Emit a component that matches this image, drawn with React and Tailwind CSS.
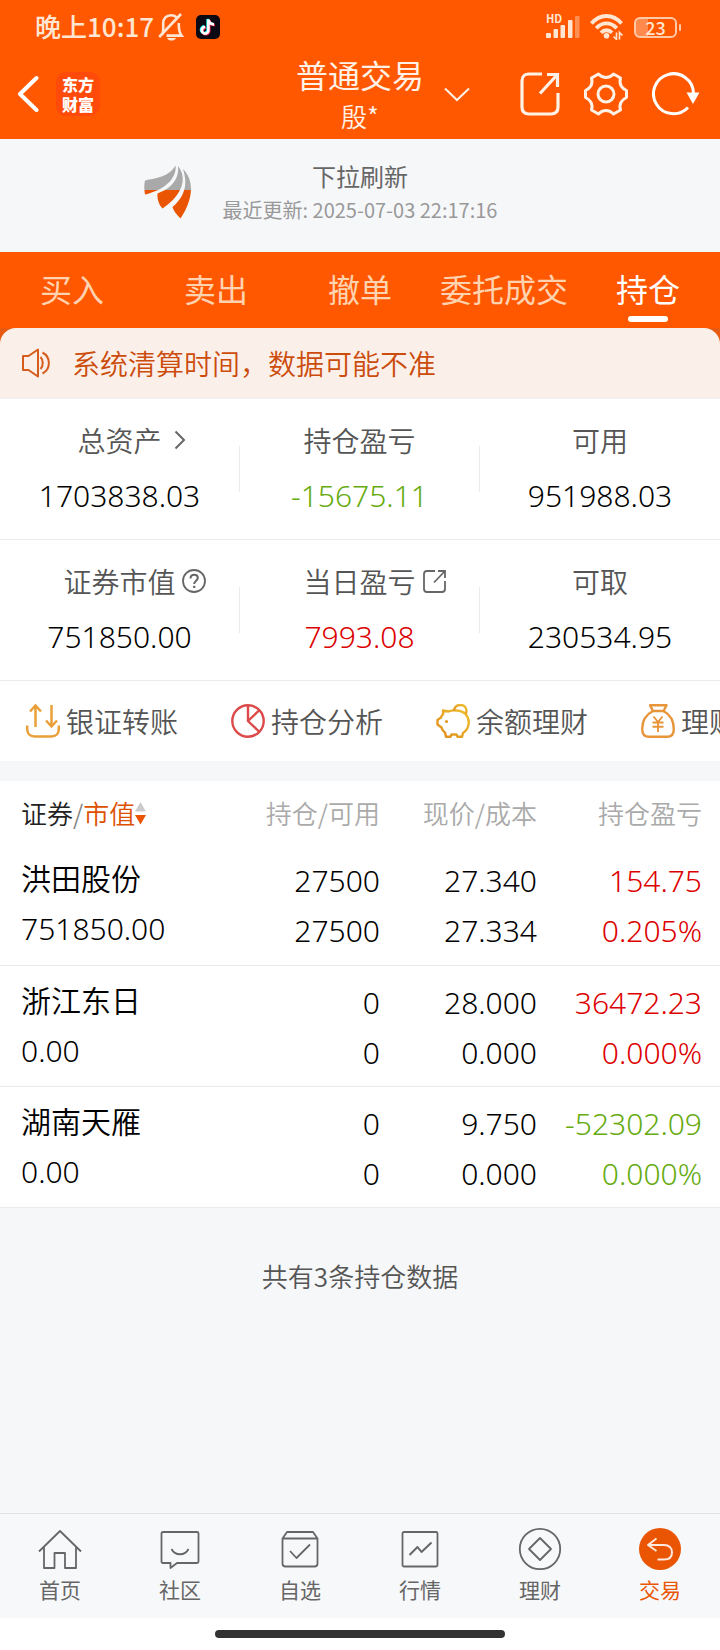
import { useState } from 'react'

const TABS = ['买入', '卖出', '撤单', '委托成交', '持仓']

const STATS = [
  [
    { label: '总资产', value: '1703838.03', color: 'text-black', icon: 'chevron' },
    { label: '持仓盈亏', value: '-15675.11', color: 'text-[#66ab10]' },
    { label: '可用', value: '951988.03', color: 'text-black' },
  ],
  [
    { label: '证券市值', value: '751850.00', color: 'text-black', icon: 'help' },
    { label: '当日盈亏', value: '7993.08', color: 'text-[#dc0000]', icon: 'open' },
    { label: '可取', value: '230534.95', color: 'text-black' },
  ],
]

const HOLDINGS = [
  {
    name: '洪田股份',
    marketValue: '751850.00',
    held: '27500',
    available: '27500',
    price: '27.340',
    cost: '27.334',
    profit: '154.75',
    rate: '0.205%',
    color: 'text-[#dc0000]',
  },
  {
    name: '浙江东日',
    marketValue: '0.00',
    held: '0',
    available: '0',
    price: '28.000',
    cost: '0.000',
    profit: '36472.23',
    rate: '0.000%',
    color: 'text-[#dc0000]',
  },
  {
    name: '湖南天雁',
    marketValue: '0.00',
    held: '0',
    available: '0',
    price: '9.750',
    cost: '0.000',
    profit: '-52302.09',
    rate: '0.000%',
    color: 'text-[#66ab10]',
  },
]

/* ---------- status bar icons ---------- */

function BellOffIcon() {
  return (
    <svg className="w-[26px] h-[28px]" viewBox="0 0 26 28" fill="none" stroke="#ffe6d3" strokeWidth="2.6">
      <path d="M4 21.5 C5.8 19 5.2 15 5.2 10.5 C5.2 5.5 8.5 2.2 13 2.2 C15.5 2.2 17.6 3.2 19 5" />
      <path d="M20.8 10 C20.8 15 20.5 18.5 23.5 22.6 H8.5" />
      <path d="M23 1 L1.2 24" />
      <path d="M9 25 H18 C17 27 15.5 27.6 13.5 27.6 C11.5 27.6 10 27 9 25 Z" fill="#ffe6d3" stroke="none" />
    </svg>
  )
}

function TiktokIcon() {
  const note = 'M12.4 4.5 V15.3 A3.3 3.3 0 1 1 9.1 12 M12.4 4.5 C12.8 7.5 14.8 9.3 18 9.4'
  return (
    <svg className="w-6 h-6" viewBox="0 0 24 24" fill="none">
      <rect width="24" height="24" rx="5" fill="#0b0a14" />
      <g strokeWidth="2.6">
        <path d={note} stroke="#25f4ee" transform="translate(-0.8 -0.6)" />
        <path d={note} stroke="#fe2c55" transform="translate(0.8 0.7)" />
        <path d={note} stroke="#ffffff" />
      </g>
    </svg>
  )
}

function SignalIcon() {
  return (
    <svg className="w-[34px] h-[22px]" viewBox="0 0 34 22" fill="#ffe6d3">
      <rect x="0" y="17" width="5" height="5" rx="1" />
      <rect x="7.5" y="13" width="4.5" height="9" rx="1" />
      <rect x="14.5" y="9" width="4.5" height="13" rx="1" />
      <rect x="22" y="4" width="4.5" height="18" rx="1" />
      <rect x="29" y="0" width="4.5" height="22" rx="1" opacity="0.4" />
    </svg>
  )
}

function WifiIcon() {
  return (
    <svg className="w-[34px] h-[26px]" viewBox="0 0 34 26" fill="none" stroke="#ffe6d3" strokeWidth="3.8">
      <path d="M1.5 9.5 C10 -0.5 23 -0.5 31.5 9.5" />
      <path d="M6.3 14.3 C12 7.8 21 7.8 26.7 14.3" />
      <path d="M11 18.8 C14.2 15.4 18.8 15.4 22 18.8" />
      <circle cx="16.5" cy="21.8" r="2.8" fill="#ffe6d3" stroke="none" />
      <path d="M26.5 18.5 V25.5 L23.5 22.5 M29.5 25.5 V18.5 L32.5 21.5" strokeWidth="1.6" />
    </svg>
  )
}

/* ---------- header icons ---------- */

function BackIcon() {
  return (
    <svg className="w-[22px] h-[38px]" viewBox="0 0 22 38" fill="none" stroke="#fff" strokeWidth="4" strokeLinecap="round" strokeLinejoin="round">
      <path d="M19.5 3 L3 19 L19.5 35" />
    </svg>
  )
}

function ShareIcon() {
  return (
    <svg className="w-10 h-11" viewBox="0 0 40 44" fill="none" stroke="#fff1e6" strokeWidth="3.2">
      <path d="M22 2 H9 C4.5 2 2 4.5 2 9 V35 C2 39.5 4.5 42 9 42 H31 C35.5 42 38 39.5 38 35 V21" />
      <path d="M27 2.5 H37.5 V15 M37 3 L20 21.5" />
    </svg>
  )
}

function GearIcon() {
  return (
    <svg className="w-11 h-11" viewBox="0 0 44 44" fill="none" stroke="#fff1e6" strokeWidth="3" strokeLinejoin="round">
      <path d="M14.5 2 C17 4.8 19.2 5.6 22 5.6 C24.8 5.6 27 4.8 29.5 2 L36.5 6 C35.5 9.5 36 12 37.2 14 C38.5 16.2 40 17.4 42.5 18.5 V25.5 C40 26.6 38.5 27.8 37.2 30 C36 32 35.5 34.5 36.5 38 L29.5 42 C27 39.2 24.8 38.4 22 38.4 C19.2 38.4 17 39.2 14.5 42 L7.5 38 C8.5 34.5 8 32 6.8 30 C5.5 27.8 4 26.6 1.5 25.5 V18.5 C4 17.4 5.5 16.2 6.8 14 C8 12 8.5 9.5 7.5 6 Z" />
      <circle cx="22" cy="22" r="8" />
    </svg>
  )
}

function RefreshIcon() {
  return (
    <svg className="w-12 h-11" viewBox="0 0 48 44" fill="none">
      <path d="M36 35.5 A20 20 0 1 1 41.5 21" stroke="#fff" strokeWidth="3" />
      <path d="M34.5 20.5 H47.5 L41 32 Z" fill="#fff" />
    </svg>
  )
}

function PhoenixLogo() {
  return (
    <svg className="w-[47px] h-[54px]" viewBox="0 0 47 54">
      <defs>
        <linearGradient id="phoenix" x1="0" y1="0" x2="0" y2="54" gradientUnits="userSpaceOnUse">
          <stop offset="0.465" stopColor="#a9a9a9" />
          <stop offset="0.465" stopColor="#ea5504" />
        </linearGradient>
      </defs>
      <g fill="url(#phoenix)">
        <path d="M31.5 0.5 C33 11 24 24 1 29.5 C0 24 0 19 1 15.5 C12 13 25 12 31.5 0.5 Z" />
        <path d="M34 1 C43 12 40 29 18.5 43.5 C15 40 13 34 13.5 28.5 C26 24 35.5 15 34 1 Z" />
        <path d="M39 4 C50 15 50 33 36.5 53.5 C33 50 29.5 46 28.5 42 C41 31 44 19 39 4 Z" />
      </g>
    </svg>
  )
}

function SpeakerIcon() {
  return (
    <svg className="w-7 h-[30px]" viewBox="0 0 28 30" fill="none" stroke="#d65c1c" strokeWidth="2" strokeLinejoin="round">
      <path d="M1 8 H6.5 L16 1.5 V28.5 L6.5 22 H1 Z" />
      <path d="M18.5 9 C21.5 12 21.5 18 18.5 21" />
      <path d="M20.5 4.5 C29 9 29 21 20.5 25.5" />
    </svg>
  )
}

function StatIcon({ type }) {
  if (type === 'chevron') {
    return (
      <svg className="ml-3 w-3 h-5" viewBox="0 0 12 20" fill="none" stroke="#666" strokeWidth="2">
        <path d="M1.5 1.5 L10 10 L1.5 18.5" />
      </svg>
    )
  }
  if (type === 'help') {
    return (
      <svg className="ml-[6px] w-6 h-6" viewBox="0 0 24 24" fill="none" stroke="#666" strokeWidth="1.8">
        <circle cx="12" cy="12" r="11" />
        <path d="M8.5 9.5 C8.5 7 10 5.8 12.2 5.8 C14.4 5.8 15.8 7.2 15.8 9 C15.8 11.6 12.2 11.8 12.2 15" strokeWidth="2" />
        <path d="M12.2 16.8 V19" strokeWidth="2.2" />
      </svg>
    )
  }
  if (type === 'open') {
    return (
      <svg className="ml-[6px] w-6 h-6" viewBox="0 0 24 24" fill="none" stroke="#666" strokeWidth="1.8">
        <path d="M13 2 H5 C3 2 2 3 2 5 V20 C2 22 3 23 5 23 H20 C22 23 23 22 23 20 V12" />
        <path d="M16 2 H23 V9 M22.5 2.5 L12 13.5" />
      </svg>
    )
  }
  return null
}

/* ---------- shortcut icons ---------- */

function TransferIcon() {
  return (
    <svg className="w-[34px] h-[34px]" viewBox="0 0 34 34" fill="none" stroke="#e9a03a" strokeWidth="2.5">
      <path d="M9.5 23 V1.5 M4 7.5 L9.5 1.5 L15 7.5" />
      <path d="M25.5 1 V22 M20 16.5 L25.5 22.5 L31 16.5" />
      <path d="M1.2 21.5 V25 C1.2 29.5 4 32.5 8.5 32.5 H25.5 C30 32.5 32.8 29.5 32.8 25 V21.5" />
    </svg>
  )
}

function PieIcon() {
  return (
    <svg className="w-[34px] h-[34px]" viewBox="0 0 34 34" fill="none" stroke="#dc4a4a" strokeWidth="2.4">
      <circle cx="17" cy="17" r="15.7" />
      <path d="M17 1 V17 L28.5 28 M17 17 L28.5 6" />
    </svg>
  )
}

function PiggyIcon() {
  return (
    <svg className="w-[34px] h-[34px]" viewBox="0 0 34 34" fill="none" strokeWidth="2.4" strokeLinejoin="round">
      <defs>
        <linearGradient id="piggy" x1="1" y1="0" x2="0" y2="1">
          <stop offset="0" stopColor="#eebf2e" />
          <stop offset="1" stopColor="#e08c1c" />
        </linearGradient>
      </defs>
      <g stroke="url(#piggy)">
        <path d="M7 6.5 L12.5 7.5 C16 6 25 5.5 29.5 10 C35 16 33 25.5 27 29 L26 32.8 H21.5 L20.5 30.5 H15.5 L14.5 32.8 H10 L9 28.5 C7 27 6 25.5 5.5 23.5 L1.5 20.5 V16 L5 13.5 C5.5 12 6.2 11 7.2 10 Z" />
        <path d="M18 7 C18.5 -1 30 -1 30.5 6.5 C30.5 8 30.2 9 29.5 10" />
      </g>
      <circle cx="10.5" cy="17.5" r="1.6" fill="#e39a20" />
    </svg>
  )
}

function MoneyBagIcon() {
  return (
    <svg className="w-[34px] h-[34px]" viewBox="0 0 34 34" fill="none" stroke="#e8953a" strokeWidth="2.4" strokeLinejoin="round">
      <path d="M9 1.2 H25.5 L22.5 7 H12 Z" />
      <path d="M12 7 C5 10.5 1.2 17.5 1.2 25 C1.2 30.5 3.5 32.8 8 32.8 H26 C30.5 32.8 32.8 30.5 32.8 25 C32.8 17.5 29 10.5 22.5 7" />
      <path d="M12.5 12.5 L17 18 L21.5 12.5 M17 18 V28 M11.5 18.5 H22.5 M11.5 22.8 H22.5" strokeWidth="1.9" />
    </svg>
  )
}

const SHORTCUTS = [
  { label: '银证转账', Icon: TransferIcon },
  { label: '持仓分析', Icon: PieIcon },
  { label: '余额理财', Icon: PiggyIcon },
  { label: '理财产品', Icon: MoneyBagIcon },
]

/* ---------- bottom navigation icons ---------- */

function NavIcon({ name }) {
  return (
    <svg className="w-11 h-11" viewBox="0 0 44 44" fill="none" stroke="#666" strokeWidth="1.8" strokeLinejoin="round">
      {name === '首页' && (
        <path d="M1 24.5 L22 4 L43 24.5 M6 20.5 V41 H16.5 V26 H27 V41 H38 V20.5" />
      )}
      {name === '社区' && (
        <>
          <path d="M5 5 H39 C40 5 40.5 5.5 40.5 6.5 V34.5 C40.5 35.5 40 36 39 36 H19 L12.5 41 V36 H5 C4 36 3.5 35.5 3.5 34.5 V6.5 C3.5 5.5 4 5 5 5 Z" />
          <path d="M13.5 22 C17 29 27 29 30.5 22" />
        </>
      )}
      {name === '自选' && (
        <>
          <path d="M4.5 11.5 L9 5 H35 L39.5 11.5 V36.5 C39.5 38.5 38.5 39.5 36.5 39.5 H7.5 C5.5 39.5 4.5 38.5 4.5 36.5 Z M4.5 11.5 H39.5" />
          <path d="M12 24 L18.5 31 L32 17.5" />
        </>
      )}
      {name === '行情' && (
        <>
          <rect x="4.5" y="5" width="35" height="34.5" rx="1.5" />
          <path d="M11.5 28 L19.5 20 L23.5 25 L33.5 15.5" strokeWidth="2" />
        </>
      )}
      {name === '理财' && (
        <>
          <circle cx="22" cy="22" r="20.2" />
          <path d="M22 11 L33 22 L22 33 L11 22 Z" />
        </>
      )}
      {name === '交易' && (
        <>
          <circle cx="22" cy="22" r="21" fill="#ea5504" stroke="none" />
          <path d="M18.5 11.5 L10 18 L18.5 24 M10 18 H26 C31 18 34 21 34 25.5 C34 30 31 32.5 26 32.5 H19.5" stroke="#ffe9dc" strokeWidth="2" />
        </>
      )}
    </svg>
  )
}

const NAV_ITEMS = ['首页', '社区', '自选', '行情', '理财', '交易']

function StatusBar() {
  return (
    <div className="h-[54px] pl-[35px] pr-[39px] flex items-center justify-between text-[#ffe6d3]">
      <div className="flex items-center">
        <span className="pb-[2px] text-[26px] leading-8 font-medium">晚上10:17</span>
        <span className="ml-1">
          <BellOffIcon />
        </span>
        <span className="ml-3">
          <TiktokIcon />
        </span>
      </div>
      <div className="flex items-center gap-[10px]">
        <div className="relative">
          <span className="absolute left-0 -top-1 text-[11px] leading-3 font-bold">HD</span>
          <SignalIcon />
        </div>
        <WifiIcon />
        <div className="flex items-center gap-[2px]">
          <span className="w-[43px] h-[21px] border-2 border-[#ffc9a5] rounded-[6px] flex items-center justify-center text-[18px] leading-4 font-medium bg-linear-to-r from-[#ff8a4d] from-30% to-transparent to-30%">
            23
          </span>
          <span className="w-[2px] h-[7px] rounded-sm bg-[#ffc9a5]" />
        </div>
      </div>
    </div>
  )
}

function Header() {
  return (
    <header className="bg-[#ff5800]">
      <StatusBar />
      <div className="h-[85px] pb-[5px] grid grid-cols-[1fr_auto_1fr] items-center text-[#fff1e6]">
        <div className="pl-[17px] flex items-center gap-[17px]">
          <button type="button" aria-label="返回">
            <BackIcon />
          </button>
          <div className="w-11 h-11 rounded-[10px] bg-[#ff4a0a] flex flex-col items-center justify-center text-[16px] leading-5 font-black text-white">
            <span>东方</span>
            <span>财富</span>
          </div>
        </div>
        <div className="flex flex-col items-center gap-1">
          <h1 className="text-[32px] leading-10">普通交易</h1>
          <span className="text-[26px] leading-9 font-[350]">殷*</span>
        </div>
        <div className="pl-5 pr-5 flex items-center justify-between">
          <button type="button" aria-label="切换账户">
            <svg className="w-[26px] h-[15px]" viewBox="0 0 26 15" fill="none" stroke="#fff1e6" strokeWidth="2">
              <path d="M1 1.5 L13 13 L25 1.5" />
            </svg>
          </button>
          <div className="flex items-center gap-6">
            <button type="button" aria-label="分享">
              <ShareIcon />
            </button>
            <button type="button" aria-label="设置">
              <GearIcon />
            </button>
            <button type="button" aria-label="刷新">
              <RefreshIcon />
            </button>
          </div>
        </div>
      </div>
    </header>
  )
}

function PullRefresh() {
  return (
    <section className="h-[113px] pb-2 bg-[#f6f7f9] grid grid-cols-[1fr_auto_1fr] items-center">
      <div className="pr-8 flex justify-end">
        <PhoenixLogo />
      </div>
      <div className="flex flex-col items-center">
        <p className="text-[24px] leading-9 text-[#666]">下拉刷新</p>
        <p className="text-[20px] leading-8 text-[#999]">最近更新: 2025-07-03 22:17:16</p>
      </div>
    </section>
  )
}

function TradeTabs({ active, onChange }) {
  return (
    <nav className="h-[76px] bg-[#ff5800] grid grid-cols-5">
      {TABS.map((tab) => (
        <button
          key={tab}
          type="button"
          onClick={() => onChange(tab)}
          className={`pt-3 flex flex-col items-center text-[32px] leading-[48px] ${
            tab === active ? 'text-white' : 'text-[#ffd2b0]'
          }`}
        >
          {tab}
          {tab === active && <span className="mt-1 w-10 h-[6px] rounded-full bg-white" />}
        </button>
      ))}
    </nav>
  )
}

function Stats() {
  return (
    <section className="border-t border-[#f0f0f0] bg-white">
      {STATS.map((row, i) => (
        <div key={i} className="h-[141px] border-b border-[#ebebeb] flex items-center">
          {row.map((stat, j) => (
            <div key={stat.label} className="flex-1 flex items-center">
              <div className="flex-1 pt-[6px] flex flex-col">
                <div className="grid grid-cols-[1fr_auto_1fr] items-center text-[28px] leading-[48px] font-[350] text-[#555]">
                  <span />
                  <span>{stat.label}</span>
                  <StatIcon type={stat.icon} />
                </div>
                <span className={`text-center font-['Noto_Sans'] text-[30px] leading-[64px] font-[350] ${stat.color}`}>
                  {stat.value}
                </span>
              </div>
              {j < row.length - 1 && <span className="w-px h-[46px] bg-[#ebebeb]" />}
            </div>
          ))}
        </div>
      ))}
    </section>
  )
}

function Shortcuts() {
  return (
    <div className="h-20 pl-[26px] bg-white flex overflow-hidden">
      {SHORTCUTS.map(({ label, Icon }) => (
        <button
          key={label}
          type="button"
          className="w-[205px] shrink-0 flex items-center gap-[6px] text-[28px] leading-10 font-[350] text-[#555] whitespace-nowrap"
        >
          <Icon />
          {label}
        </button>
      ))}
    </div>
  )
}

function HoldingsTable() {
  return (
    <table className="mt-5 w-full table-fixed bg-white">
      <thead>
        <tr className="h-[63px] text-[26px] leading-10 text-right text-[#aaa]">
          <th className="pl-[21px] text-left font-[350]">
            <button type="button" className="flex items-center">
              <span className="text-[#222]">证券</span>
              <span className="text-[#888]">/</span>
              <span className="text-[#dc5000]">市值</span>
              <svg className="w-[11px] h-6" viewBox="0 0 11 24">
                <path d="M5.5 1 L11 10.5 H0 Z" fill="#ccc" />
                <path d="M5.5 23.5 L11 14 H0 Z" fill="#ea5504" />
              </svg>
            </button>
          </th>
          <th className="w-[140px] font-[350]">持仓/可用</th>
          <th className="w-[157px] font-[350]">现价/成本</th>
          <th className="w-[183px] pr-[18px] font-[350]">持仓盈亏</th>
        </tr>
      </thead>
      <tbody className="font-['Noto_Sans','Noto_Sans_CJK_SC',sans-serif] text-[30px] leading-[50px] font-[350] text-black">
        {HOLDINGS.map((item) => (
          <tr key={item.name} className="h-[121px] border-b border-[#ebebeb] text-right">
            <td className="pl-[21px] text-left">
              <p>{item.name}</p>
              <p>{item.marketValue}</p>
            </td>
            <td className="pt-1">
              <p>{item.held}</p>
              <p>{item.available}</p>
            </td>
            <td className="pt-1">
              <p>{item.price}</p>
              <p>{item.cost}</p>
            </td>
            <td className={`pt-1 pr-[18px] ${item.color}`}>
              <p>{item.profit}</p>
              <p>{item.rate}</p>
            </td>
          </tr>
        ))}
      </tbody>
    </table>
  )
}

function BottomNav() {
  return (
    <footer className="bg-white">
      <nav className="h-[105px] pt-[13px] border-t border-[#e2e2e4] bg-[#f7f8fa] grid grid-cols-6">
        {NAV_ITEMS.map((name) => (
          <a
            key={name}
            href="#"
            className={`flex flex-col items-center text-[21px] leading-9 ${
              name === '交易' ? 'text-[#ea5504]' : 'text-[#666]'
            }`}
          >
            <NavIcon name={name} />
            {name}
          </a>
        ))}
      </nav>
      <div className="h-8 flex items-center justify-center">
        <span className="w-[290px] h-2 rounded-full bg-[#333]" />
      </div>
    </footer>
  )
}

export default function App() {
  const [tab, setTab] = useState('持仓')

  return (
    <div className="min-h-screen flex flex-col bg-[#f6f7f9] font-['Noto_Sans_CJK_SC',sans-serif]">
      <Header />
      <PullRefresh />
      <TradeTabs active={tab} onChange={setTab} />

      {/* Notice sits on an orange strip so its rounded corners show */}
      <div className="bg-[#e85a10]">
        <div className="h-[70px] pl-[22px] rounded-t-[16px] bg-[#fbf0e9] flex items-center gap-[22px] text-[28px] font-[350] text-[#cc4c0c]">
          <SpeakerIcon />
          <span>系统清算时间，数据可能不准</span>
        </div>
      </div>

      <main className="flex-1">
        <Stats />
        <Shortcuts />
        <HoldingsTable />
        <p className="pt-12 text-center text-[26px] leading-10 font-[350] text-[#555]">共有3条持仓数据</p>
      </main>

      <BottomNav />
    </div>
  )
}
